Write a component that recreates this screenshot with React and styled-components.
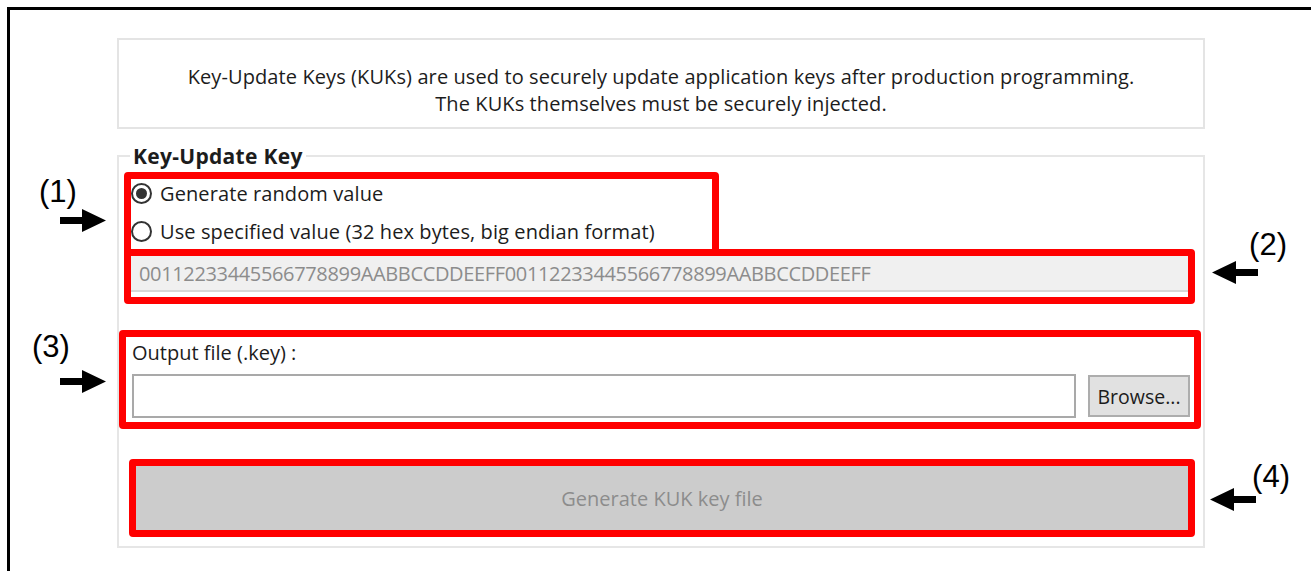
import React from "react";
import styled, { createGlobalStyle } from "styled-components";

const GlobalStyle = createGlobalStyle`
  html, body {
    margin: 0;
    padding: 0;
    background: #ffffff;
  }
  body {
    font-family: "Open Sans", "Noto Sans", sans-serif;
    color: #1c1c1c;
  }
  * { box-sizing: border-box; }
`;

const Frame = styled.div`
  margin: 7px 0 0 7px;
  min-height: calc(100vh - 7px);
  border-left: 3px solid #000;
  border-top: 3px solid #000;
  padding: 28px 0 0 107px;
`;

const Panel = styled.div`
  width: 1088px;
  display: flex;
  flex-direction: column;
`;

const InfoBox = styled.div`
  height: 91px;
  border: 2px solid #e4e4e4;
  padding-top: 23px;
  text-align: center;
  font-size: 20px;
  line-height: 27px;
  letter-spacing: 0.1px;
  color: #1c1c1c;
`;

const GroupBox = styled.fieldset`
  margin: 15px 0 0;
  padding: 4px 0 9px;
  border: 2px solid #e6e6e6;
  min-inline-size: 0;
  display: flex;
  flex-direction: column;
`;

const Legend = styled.legend`
  margin-left: 11px;
  padding: 0 3px;
  font-size: 21px;
  line-height: 24px;
  font-weight: 700;
  letter-spacing: 0.3px;
  color: #1c1c1c;
`;

/* red call-out frame wrapped around a region of the form */
const Highlight = styled.div`
  position: relative;
  border: 7px solid #ff0000;
  border-radius: 4px;
  margin-left: ${(p) => p.$left || 0}px;
  margin-right: ${(p) => p.$right || 0}px;
  margin-top: ${(p) => p.$top || 0}px;
  width: ${(p) => (p.$width ? `${p.$width}px` : "auto")};
  height: ${(p) => p.$height}px;
`;

const RadioList = styled.div`
  display: flex;
  flex-direction: column;
  gap: 10px;
`;

const RadioRow = styled.label`
  display: flex;
  align-items: center;
  gap: 8px;
  height: 28px;
  font-size: 20px;
  letter-spacing: 0.1px;
  color: #1c1c1c;
`;

const RadioCircle = styled.span`
  width: 21px;
  height: 21px;
  border-radius: 50%;
  border: 2px solid #333;
  display: flex;
  align-items: center;
  justify-content: center;
  flex: none;
  &::after {
    content: "";
    width: 11px;
    height: 11px;
    border-radius: 50%;
    background: ${(p) => (p.$checked ? "#333" : "transparent")};
  }
`;

const HexField = styled.div`
  height: 36px;
  background: #f0f0f0;
  border-bottom: 2px solid #d7d7d7;
  padding-left: 8px;
  display: flex;
  align-items: center;
  font-size: 20px;
  letter-spacing: -0.35px;
  color: #8c8c8c;
  white-space: nowrap;
  overflow: hidden;
`;

const FileSection = styled.div`
  padding: 4px 4px 4px 6px;
  display: flex;
  flex-direction: column;
  gap: 9px;
`;

const FieldLabel = styled.div`
  font-size: 20px;
  line-height: 24px;
  color: #1c1c1c;
`;

const FileRow = styled.div`
  display: flex;
  align-items: center;
  gap: 12px;
`;

const PathInput = styled.div`
  width: 944px;
  height: 44px;
  border: 2px solid #a9a9a9;
  background: #fff;
`;

const BrowseButton = styled.button`
  width: 102px;
  height: 42px;
  background: #e1e1e1;
  border: 2px solid #adadad;
  font-family: inherit;
  font-size: 19.5px;
  color: #1c1c1c;
  padding: 0;
`;

const GenerateButton = styled.button`
  width: 100%;
  height: 100%;
  border: none;
  background: #cccccc;
  font-family: inherit;
  font-size: 20px;
  color: #8c8c8c;
  padding: 0;
`;

/* numbered marker with its arrow, sitting in the page margin */
const Callout = styled.div`
  position: absolute;
  top: ${(p) => p.$top}px;
  left: ${(p) => p.$x}px;
  display: flex;
  flex-direction: column;
  align-items: ${(p) => (p.$side === "left" ? "flex-start" : "flex-end")};
  pointer-events: none;
`;

const CalloutNumber = styled.span`
  font-family: "Liberation Sans", Arial, sans-serif;
  font-size: 31px;
  line-height: 34px;
  color: #000;
  margin-${(p) => (p.$side === "left" ? "left" : "right")}: ${(p) => p.$indent}px;
`;

const ArrowSvg = styled.svg`
  display: block;
  margin-top: ${(p) => p.$gap}px;
  margin-${(p) => (p.$side === "left" ? "left" : "right")}: ${(p) => p.$indent}px;
`;

function Arrow({ dir, gap, indent, side }) {
  const pts =
    dir === "right"
      ? "0,8 22,8 22,0 46,11.5 22,23 22,15 0,15"
      : "46,8 24,8 24,0 0,11.5 24,23 24,15 46,15";
  return (
    <ArrowSvg width="46" height="23" viewBox="0 0 46 23" $gap={gap} $indent={indent} $side={side}>
      <polygon points={pts} fill="#000" />
    </ArrowSvg>
  );
}

function Marker({ n, side, x, top, numIndent, arrowIndent, gap }) {
  return (
    <Callout $side={side} $x={x} $top={top}>
      <CalloutNumber $side={side} $indent={numIndent}>({n})</CalloutNumber>
      <Arrow dir={side === "left" ? "right" : "left"} gap={gap} indent={arrowIndent} side={side} />
    </Callout>
  );
}

export default function App() {
  return (
    <>
      <GlobalStyle />
      <Frame>
        <Panel>
          <InfoBox>
            Key-Update Keys (KUKs) are used to securely update application keys after production programming.
            <br />
            The KUKs themselves must be securely injected.
          </InfoBox>

          <GroupBox>
            <Legend>Key-Update Key</Legend>

            <Highlight $left={5} $width={595} $height={84}>
              <RadioList>
                <RadioRow>
                  <RadioCircle $checked />
                  Generate random value
                </RadioRow>
                <RadioRow>
                  <RadioCircle />
                  Use specified value (32 hex bytes, big endian format)
                </RadioRow>
              </RadioList>
              <Marker n={1} side="left" x={-96} top={-4} numIndent={4} arrowIndent={25} gap={0} />
            </Highlight>

            <Highlight $left={5} $right={8} $top={-7} $height={55}>
              <HexField>
                00112233445566778899AABBCCDDEEFF00112233445566778899AABBCCDDEEFF
              </HexField>
              <Marker n={2} side="right" x={1081} top={-28} numIndent={-9} arrowIndent={20} gap={-1} />
            </Highlight>

            <Highlight $right={2} $top={26} $height={99}>
              <FileSection>
                <FieldLabel>Output file (.key) :</FieldLabel>
                <FileRow>
                  <PathInput />
                  <BrowseButton>Browse...</BrowseButton>
                </FileRow>
              </FileSection>
              <Marker n={3} side="left" x={-94} top={-7} numIndent={0} arrowIndent={28} gap={6} />
            </Highlight>

            <Highlight $left={10} $right={8} $top={30} $height={78}>
              <GenerateButton>Generate KUK key file</GenerateButton>
              <Marker n={4} side="right" x={1074} top={-6} numIndent={-14} arrowIndent={20} gap={-6} />
            </Highlight>
          </GroupBox>
        </Panel>
      </Frame>
    </>
  );
}
